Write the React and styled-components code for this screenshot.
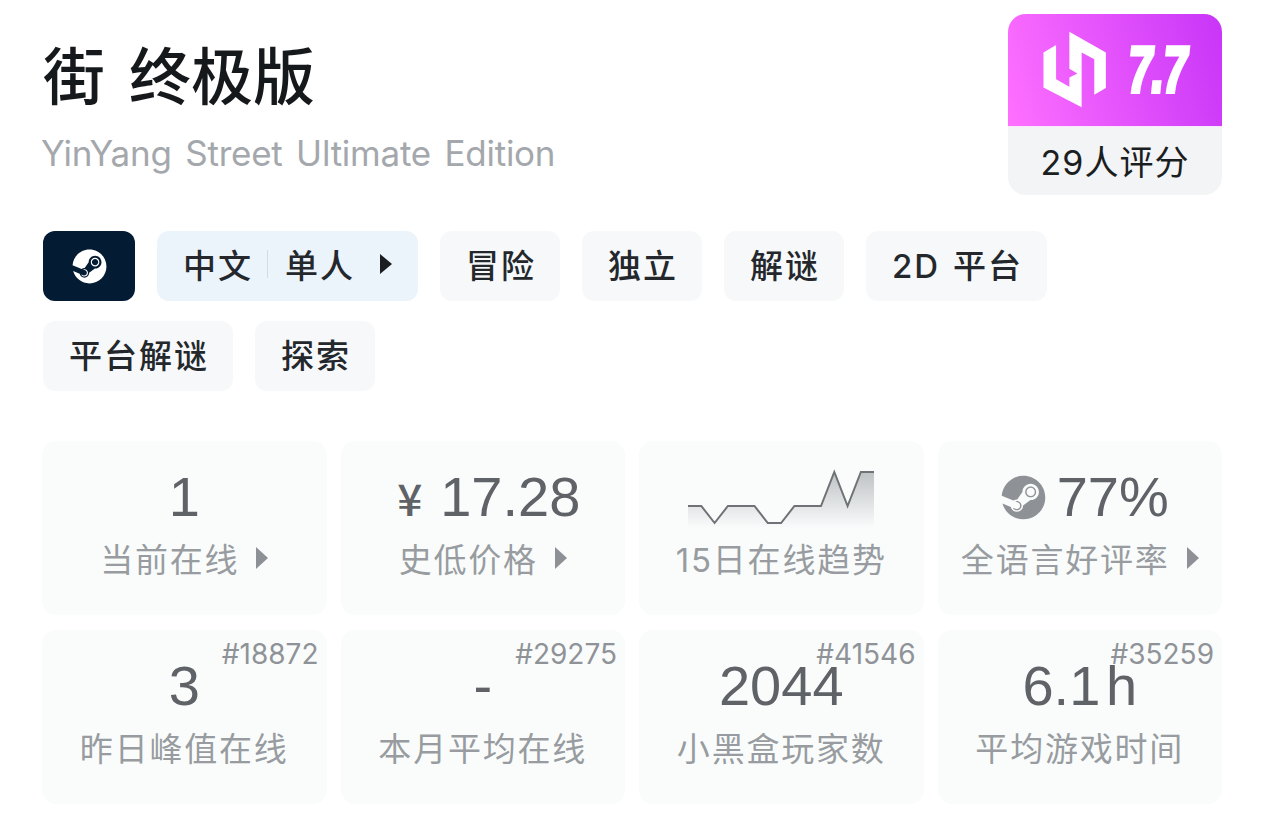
import React from "react";
import styled, { createGlobalStyle } from "styled-components";
import { FaSteam } from "react-icons/fa";

const Global = createGlobalStyle`
  html, body { margin: 0; padding: 0; background: #fff; }
  body { font-family: Inter, "Noto Sans CJK SC", sans-serif; }
`;

const Page = styled.div`
  box-sizing: border-box;
  width: 1264px;
  height: 829px;
  padding: 14px 42px 0 43px;
  overflow: hidden;
`;
const Header = styled.header`
  display: flex;
  justify-content: space-between;
  align-items: flex-start;
`;
const TitleBlock = styled.div`
  display: flex;
  flex-direction: column;
  padding-top: 21px;
`;
const Title = styled.h1`
  margin: 0;
  font-family: "Noto Sans CJK SC", sans-serif;
  font-size: 62px;
  line-height: 76px;
  font-weight: 500;
  color: #16191c;
  word-spacing: 10px;
`;
const Subtitle = styled.div`
  margin-top: 19px;
  margin-left: -2px;
  font-size: 35px;
  line-height: 46px;
  color: #a4a8ac;
  letter-spacing: -0.25px;
  word-spacing: 4px;
  white-space: nowrap;
`;
const Rating = styled.div`
  width: 214px;
  height: 181px;
  border-radius: 18px;
  overflow: hidden;
  background: #f3f4f6;
  display: flex;
  flex-direction: column;
`;
const ScoreBar = styled.div`
  height: 113px;
  background: linear-gradient(75deg, #ff70ff 0%, #c835f8 100%);
  display: flex;
  align-items: center;
  padding-left: 35px;
  gap: 21px;
  border-bottom: 1px solid #fbe6fd;
  box-sizing: border-box;
`;
const ScoreNum = styled.span`
  display: inline-block;
  color: #fff;
  font-family: "Liberation Sans", sans-serif;
  font-weight: 700;
  font-size: 65px;
  line-height: 68px;
  transform: skewX(-6deg) scaleX(0.7);
  transform-origin: left center;
  -webkit-text-stroke: 4px #fff;
  letter-spacing: -2px;
  white-space: nowrap;
`;
const Count = styled.div`
  flex: 1;
  display: flex;
  align-items: center;
  justify-content: center;
  font-size: 34px;
  letter-spacing: 1px;
  color: #1b1e21;
  padding-bottom: 2px;
`;
const Tags = styled.div`
  margin-top: 36px;
  display: flex;
  flex-wrap: wrap;
  gap: 20px 22px;
`;
const Tag = styled.div`
  height: 70px;
  padding: 0 ${(p) => (p.$blue ? 26 : 24)}px 4px 26px;
  box-sizing: border-box;
  border-radius: 12px;
  background: ${(p) => (p.$blue ? "#ebf3fb" : "#f6f8fa")};
  display: flex;
  align-items: center;
  font-size: 33px;
  letter-spacing: 2px;
  word-spacing: 2px;
  font-weight: 500;
  color: #24282c;
  white-space: pre;
`;
const SteamTag = styled.div`
  width: 92px;
  height: 70px;
  border-radius: 12px;
  background: #031b33;
  color: #fff;
  display: flex;
  align-items: center;
  justify-content: center;
  font-size: 35px;
`;
const Divider = styled.span`
  width: 1px;
  height: 28px;
  background: #d5dbe1;
  margin: 0 17px 0 14px;
`;
const Arrow = styled.span`
  display: inline-block;
  width: 0;
  height: 0;
  border-style: solid;
  border-width: ${(p) => p.$h / 2}px 0 ${(p) => p.$h / 2}px ${(p) => p.$w}px;
  border-color: transparent transparent transparent ${(p) => p.$color};
  margin-left: ${(p) => p.$gap}px;
`;
const Grid = styled.div`
  margin-top: 50px;
  display: grid;
  grid-template-columns: repeat(4, 284.5px);
  grid-auto-rows: 174px;
  gap: 15px 14px;
  margin-left: -1px;
`;
const Card = styled.div`
  position: relative;
  border-radius: 14px;
  background: #fafcfc;
  display: flex;
  flex-direction: column;
  align-items: center;
  padding-top: 26px;
  box-sizing: border-box;
`;
const Value = styled.div`
  height: 60px;
  display: flex;
  align-items: center;
  justify-content: center;
  font-family: "Liberation Sans", "Noto Sans CJK SC", sans-serif;
  font-size: 56px;
  line-height: 60px;
  color: #5f6367;
  word-spacing: -10px;
  white-space: pre;
`;
const Yen = styled.span`
  font-family: "Noto Sans CJK SC", sans-serif;
  font-size: 44px;
  font-weight: 500;
  margin: 0 18px 0 12px;
`;
const Label = styled.div`
  margin-top: 1px;
  height: 60px;
  display: flex;
  align-items: center;
  font-size: 33px;
  letter-spacing: 1.8px;
  color: #989ca0;
  white-space: nowrap;
`;
const Rank = styled.span`
  position: absolute;
  top: 6px;
  right: 8px;
  font-size: 28px;
  line-height: 36px;
  color: #8f9397;
`;
const SteamMark = styled.span`
  display: flex;
  font-size: 45px;
  color: #8e9195;
  margin: 0 11px 0 10px;
`;

const Logo = () => (
  <svg width="64" height="78" viewBox="40 20 190 235" fill="#fff">
    <path d="M118 22 L228 85 V192 L193 212 V105 L155 85 V250 L40 190 V85 L78 62 V165 L118 188 V160 L142 148 L118 134 Z" />
  </svg>
);

const trend = [505, 505, 522, 505, 505, 505, 522, 522, 505, 505, 505, 471, 505, 471, 471];
const Trend = () => {
  const pts = trend.map((y, i) => `${i * 13.3},${y - 465}`).join(" ");
  return (
    <svg width="186" height="62" viewBox="0 0 186 62">
      <defs>
        <linearGradient id="trendFill" x1="0" y1="0" x2="0" y2="1">
          <stop offset="0" stopColor="#bfc2c5" />
          <stop offset="1" stopColor="#fafcfc" />
        </linearGradient>
      </defs>
      <polygon points={`0,62 ${pts} 186,6 186,62`} fill="url(#trendFill)" />
      <polyline points={pts} fill="none" stroke="#6f7377" strokeWidth="2" />
    </svg>
  );
};

const stats = [
  { value: "1", label: "当前在线", arrow: true },
  { value: <><Yen>¥</Yen>17.28</>, label: "史低价格", arrow: true },
  { value: <Trend />, label: "15日在线趋势" },
  { value: <><SteamMark><FaSteam /></SteamMark>77%</>, label: "全语言好评率", arrow: true },
  { value: "3", label: "昨日峰值在线", rank: "#18872" },
  { value: "-", label: "本月平均在线", rank: "#29275" },
  { value: "2044", label: "小黑盒玩家数", rank: "#41546" },
  { value: "6.1 h", label: "平均游戏时间", rank: "#35259" },
];

export default function App() {
  return (
    <Page>
      <Global />
      <Header>
        <TitleBlock>
          <Title>街 终极版</Title>
          <Subtitle>YinYang Street Ultimate Edition</Subtitle>
        </TitleBlock>
        <Rating>
          <ScoreBar>
            <Logo />
            <ScoreNum>7.7</ScoreNum>
          </ScoreBar>
          <Count>29人评分</Count>
        </Rating>
      </Header>
      <Tags>
        <SteamTag><FaSteam /></SteamTag>
        <Tag $blue>
          中文<Divider />单人
          <Arrow $w={12} $h={20} $color="#1b1e21" $gap={25} />
        </Tag>
        <Tag>冒险</Tag>
        <Tag>独立</Tag>
        <Tag>解谜</Tag>
        <Tag>2D 平台</Tag>
        <Tag>平台解谜</Tag>
        <Tag>探索</Tag>
      </Tags>
      <Grid>
        {stats.map((s, i) => (
          <Card key={i}>
            <Value>{s.value}</Value>
            <Label>
              {s.label}
              {s.arrow && <Arrow $w={12} $h={22} $color="#8d9195" $gap={17} />}
            </Label>
            {s.rank && <Rank>{s.rank}</Rank>}
          </Card>
        ))}
      </Grid>
    </Page>
  );
}
